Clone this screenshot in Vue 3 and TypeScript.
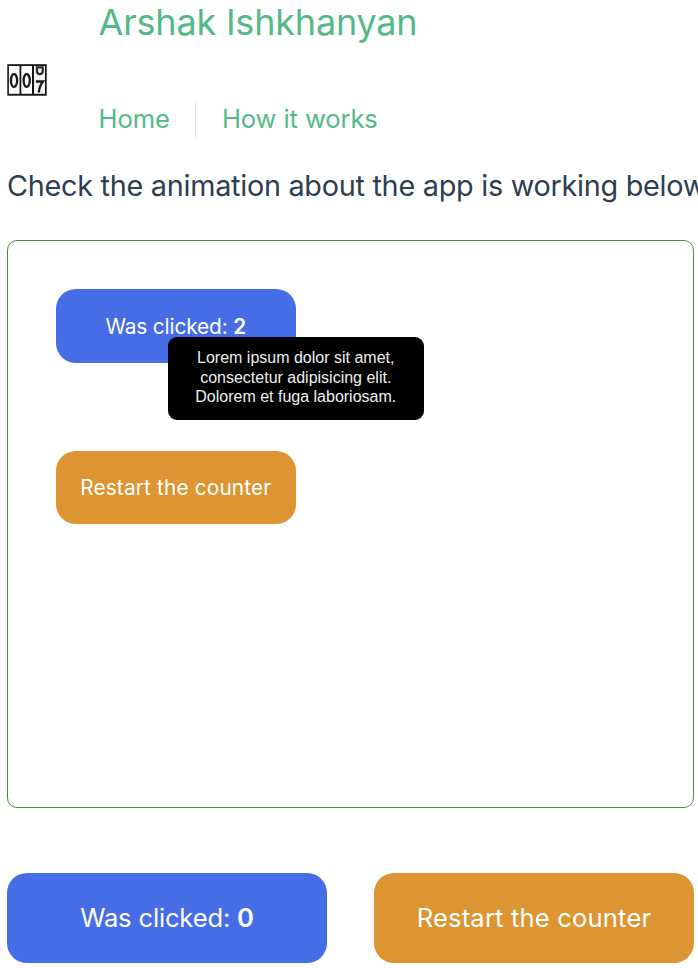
<script setup lang="ts">
import { ref } from 'vue'

const previewClicks = ref<number>(2)
const clicks = ref<number>(0)
const links: string[] = ['Home', 'How it works']
</script>

<template>
  <div class="page">
    <header class="header">
      <svg class="logo" width="40" height="32" viewBox="0 0 40 32" aria-hidden="true">
        <rect x="0.300" y="0.200" width="39.400" height="31.500" fill="#151515" />
        <rect x="1.900" y="2" width="10.600" height="27.800" fill="#fff" />
        <rect x="14.300" y="2" width="10.700" height="27.800" fill="#fff" />
        <rect x="27" y="2" width="11" height="27.800" fill="#f2f2f2" />
        <ellipse cx="7" cy="16.400" rx="3.100" ry="6.400" fill="none" stroke="#1a1a1a" stroke-width="2.300" />
        <ellipse cx="19.700" cy="16.400" rx="3.100" ry="6.400" fill="none" stroke="#1a1a1a" stroke-width="2.300" />
        <path d="M28.900 3.400h7.800M29.900 4v2.500c0 4.900 5.900 4.900 5.900 0V4" fill="none" stroke="#2a2a2a" stroke-width="2.200" />
        <path d="M28.900 17.500h7.100c-2.400 3-3.900 6.300-4.100 11" fill="none" stroke="#1a1a1a" stroke-width="2.300" />
      </svg>
      <div class="intro">
        <a class="name">Arshak Ishkhanyan</a>
        <nav class="nav">
          <a v-for="link in links" :key="link" class="link">{{ link }}</a>
        </nav>
      </div>
    </header>

    <h1 class="heading">Check the animation about the app is working below</h1>

    <section class="preview">
      <div class="tooltip-anchor">
        <button class="button small primary" @click="previewClicks++">
          <span>Was clicked: <b>{{ previewClicks }}</b></span>
        </button>
        <div class="tooltip">
          Lorem ipsum dolor sit amet,<br />consectetur adipisicing elit.<br />Dolorem et fuga laboriosam.
        </div>
      </div>
      <button class="button small warning" @click="previewClicks = 0"><span>Restart the counter</span></button>
    </section>

    <div class="actions">
      <button class="button primary" @click="clicks++"><span>Was clicked: <b>{{ clicks }}</b></span></button>
      <button class="button warning" @click="clicks = 0"><span>Restart the counter</span></button>
    </div>
  </div>
</template>

<style>
body {
  background: #fff;
  overflow: hidden;
}
</style>

<style scoped>
.page {
  width: 698px;
  height: 968px;
  box-sizing: border-box;
  padding: 0 4px 0 7px;
  overflow: hidden;
  font-family: Inter, sans-serif;
  color: #2c3e50;
}
.header {
  display: flex;
  align-items: flex-start;
  gap: 51.500px;
  height: 160px;
}
.logo {
  flex: none;
  margin-top: 64px;
}
.intro {
  display: flex;
  flex-direction: column;
  gap: 55px;
}
.name {
  height: 45px;
  font-size: 36px;
  line-height: 45px;
  letter-spacing: -0.200px;
  color: #54b987;
  white-space: nowrap;
}
.nav {
  display: flex;
  height: 38px;
}
.link {
  font-size: 25.600px;
  line-height: 38px;
  letter-spacing: -0.120px;
  color: #54b987;
}
.link + .link {
  margin-left: 25.700px;
  padding-left: 25.500px;
  border-left: 1px solid #e8e8e8;
}
.heading {
  margin: 0 0 30px;
  height: 50px;
  font-size: 28.800px;
  line-height: 52px;
  font-weight: 400;
  letter-spacing: -0.270px;
  white-space: nowrap;
}
.preview {
  display: flex;
  flex-direction: column;
  align-items: flex-start;
  gap: 88px;
  box-sizing: border-box;
  width: 687px;
  height: 568px;
  padding: 48.300px 48px;
  border: 1px solid #4b8f3c;
  border-radius: 10px;
}
.button {
  display: flex;
  align-items: center;
  justify-content: center;
  box-sizing: border-box;
  width: 320px;
  height: 90px;
  padding: 0 0 1px;
  border: 0;
  border-radius: 20px;
  font-family: inherit;
  font-size: 25.600px;
  color: #fff;
  white-space: nowrap;
}
.button b {
  font-weight: 600;
}
.primary {
  background: #466de6;
  letter-spacing: -0.180px;
}
.warning {
  background: #dd9433;
  letter-spacing: 0.160px;
}
.small {
  width: 239.500px;
  height: 73.500px;
  padding: 0;
  font-size: 20.800px;
}
.small.primary {
  letter-spacing: -0.120px;
}
.small.warning {
  height: 73px;
}
.tooltip-anchor {
  position: relative;
}
.tooltip {
  position: absolute;
  left: 112px;
  top: 47.700px;
  box-sizing: border-box;
  width: 255.500px;
  height: 83px;
  padding-top: 11.400px;
  border-radius: 9px;
  background: #000;
  color: #eee;
  font: 16px/19.500px "Liberation Sans", sans-serif;
  letter-spacing: 0;
  text-align: center;
  white-space: nowrap;
}
.actions {
  display: flex;
  justify-content: space-between;
  margin-top: 65px;
}
</style>
